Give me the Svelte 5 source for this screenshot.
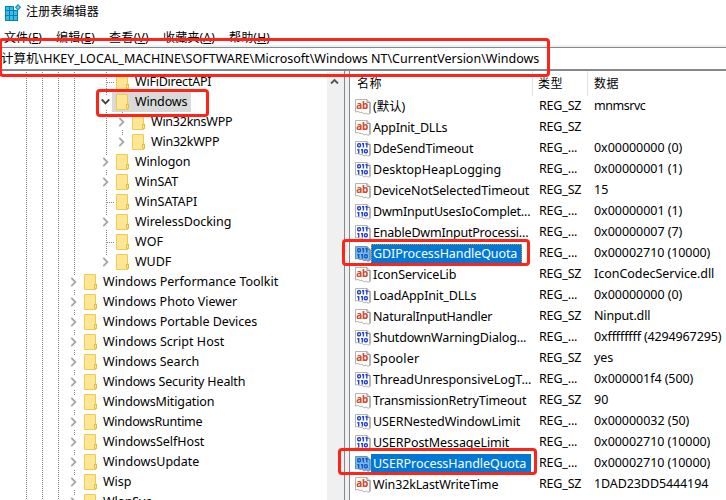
<script>
  const tree = [
    { name: 'WiFiDirectAPI', level: 1, width: 77, leaf: true },
    { name: 'Windows', level: 1, width: 53, open: true },
    { name: 'Win32knsWPP', level: 2, width: 82 },
    { name: 'Win32kWPP', level: 2, width: 69 },
    { name: 'Winlogon', level: 1, width: 56 },
    { name: 'WinSAT', level: 1, width: 44 },
    { name: 'WinSATAPI', level: 1, width: 63, leaf: true },
    { name: 'WirelessDocking', level: 1, width: 97 },
    { name: 'WOF', level: 1, width: 29, leaf: true },
    { name: 'WUDF', level: 1, width: 37 },
    { name: 'Windows Performance Toolkit', level: 0, width: 176 },
    { name: 'Windows Photo Viewer', level: 0, width: 135 },
    { name: 'Windows Portable Devices', level: 0, width: 155 },
    { name: 'Windows Script Host', level: 0, width: 122 },
    { name: 'Windows Search', level: 0, width: 97 },
    { name: 'Windows Security Health', level: 0, width: 143 },
    { name: 'WindowsMitigation', level: 0, width: 112 },
    { name: 'WindowsRuntime', level: 0, width: 100 },
    { name: 'WindowsSelfHost', level: 0, width: 102 },
    { name: 'WindowsUpdate', level: 0, width: 97 },
    { name: 'Wisp', level: 0, width: 29 },
    { name: 'WlanSvc', level: 0, width: 49 }
  ];

  // name, name width, is string, data, data width
  const values = [
    ['(默认)', 33, true, 'mnmsrvc', 52],
    ['AppInit_DLLs', 75, true, '', 0],
    ['DdeSendTimeout', 101, false, '0x00000000 (0)', 89],
    ['DesktopHeapLogging', 129, false, '0x00000001 (1)', 89],
    ['DeviceNotSelectedTimeout', 157, true, '15', 15],
    ['DwmInputUsesIoComplet...', 158, false, '0x00000001 (1)', 89],
    ['EnableDwmInputProcessi...', 156, false, '0x00000007 (7)', 89],
    ['GDIProcessHandleQuota', 145, false, '0x00002710 (10000)', 117],
    ['IconServiceLib', 84, true, 'IconCodecService.dll', 121],
    ['LoadAppInit_DLLs', 104, false, '0x00000000 (0)', 89],
    ['NaturalInputHandler', 120, true, 'Ninput.dll', 57],
    ['ShutdownWarningDialog...', 154, false, '0xffffffff (4294967295)', 128],
    ['Spooler', 47, true, 'yes', 20],
    ['ThreadUnresponsiveLogT...', 159, false, '0x000001f4 (500)', 100],
    ['TransmissionRetryTimeout', 154, true, '90', 15],
    ['USERNestedWindowLimit', 148, false, '0x00000032 (50)', 96],
    ['USERPostMessageLimit', 137, false, '0x00002710 (10000)', 117],
    ['USERProcessHandleQuota', 154, false, '0x00002710 (10000)', 117],
    ['Win32kLastWriteTime', 126, true, '1DAD23DD5444194', 115]
  ];

  const menus = [
    ['文件', 'F', 38],
    ['编辑', 'E', 39],
    ['查看', 'V', 40],
    ['收藏夹', 'A', 52],
    ['帮助', 'H', 41]
  ];

  function fit(node, width) {
    if (!width) return;
    node.style.letterSpacing = '0px';
    const natural = node.getBoundingClientRect().width;
    const count = Math.max(1, node.textContent.length);
    node.style.letterSpacing = ((width - 0.7 - natural) / count).toFixed(3) + 'px';
  }
</script>

<div class="app">
  <header class="title">
    <svg class="logo" width="17" height="17" viewBox="0 0 17 17">
      <path d="M0 2h9v4h4v11H0z" fill="#087fae" />
      <path d="M1 3h3v3H1zM5 3h3v3H5zM1 7h3v4H1zM5 7h3v4H5zM9 7h3v4H9zM1 12h3v4H1zM5 12h3v4H5zM9 12h3v4H9z" fill="#38bde6" />
      <path d="M13 0l3.2 3.2L13 6.4 9.8 3.2z" fill="#168dbb" />
      <path d="M13 1.5l1.7 1.7L13 4.9l-1.7-1.7z" fill="#5fd0ef" />
    </svg>
    <span use:fit={73.5}>注册表编辑器</span>
  </header>
  <nav class="menu">
    {#each menus as [label, key, width]}
      <span use:fit={width + 0.7}>{label}(<u>{key}</u>)</span>
    {/each}
  </nav>
  <div class="address"><span use:fit={539}>计算机\HKEY_LOCAL_MACHINE\SOFTWARE\Microsoft\Windows NT\CurrentVersion\Windows</span></div>

  <main>
    <section class="tree">
      <svg class="guides" width="130" height="429" fill="none" stroke="#858585" stroke-dasharray="1 1">
        <path d="M26.5 1V429M42.5 1V429M58.5 1V429M74.5 1V429M106.5 1V191M122.5 41V71M107 11.5H114M107 131.5H114M107 171.5H114" />
      </svg>
      {#each tree as item}
        <div class="node l{item.level}">
          <span class="toggle" class:blank={!item.leaf}>
            {#if item.open}
              <svg width="9" height="8" viewBox="0 0 9 8"><path d="M.7 1.3L4.5 5.4 8.3 1.3" fill="none" stroke="#404040" stroke-width="1.8" /></svg>
            {:else if !item.leaf}
              <svg width="9" height="10" viewBox="0 0 9 10"><path d="M2.3 .8L6.4 5 2.3 9.2" fill="none" stroke="#a6a6a6" stroke-width="1.8" /></svg>
            {/if}
          </span>
          <span class="entry" class:current={item.open}>
            <svg class="folder" width="13" height="16" viewBox="0 0 13 16">
              <path d="M.5 .5h11v9.5h1v4.5h-1v1H.5z" fill="#ffe694" stroke="#edca50" />
              <path d="M10.5 14.5v-4h2v4z" fill="#ffe694" stroke="#e8bd35" />
            </svg>
            <span class="label" use:fit={item.width}>{item.name}</span>
          </span>
        </div>
      {/each}
    </section>
    <div class="scroll">
      <svg width="9" height="7" viewBox="0 0 9 7"><path d="M1 5.5L4.5 2 8 5.5" fill="none" stroke="#555" stroke-width="1.8" /></svg>
    </div>
    <div class="splitter"></div>
    <section class="list">
      <div class="head">
        <span class="c1"><span use:fit={25.5}>名称</span></span>
        <span class="c2"><span use:fit={25.5}>类型</span></span>
        <span class="c3"><span use:fit={25.5}>数据</span></span>
      </div>
      {#each values as [name, width, str, data, dataWidth]}
        {@const sel = name.endsWith('HandleQuota')}
        <div class="row">
          <div class="name">
            <svg class="kind" width="16" height="16" viewBox="0 0 16 16">
              <path d="M.5 .5H12l3 3v11l-2 .8-2-1.3-2 1-2-1.8-2 .3-2-1-2.5.5z" fill={sel ? '#78b7ea' : '#fdfdfd'} stroke={sel ? '#6594bd' : '#b5b5b5'} />
              <path d="M12 .5v3h3v10.8" fill="none" stroke={sel ? '#5c83a8' : '#909090'} />
              {#if str}
                <text x="1.3" y="10" class="ab" textLength="12">ab</text>
              {:else}
                <g fill="none" stroke={sel ? '#1359c4' : '#2745d2'} stroke-width="1.4">
                  <rect x="2.7" y="2.7" width="2.8" height="3" rx="1" />
                  <path d="M7 2.7h1.4v3.8M10.4 2.7h1.4v3.8" />
                  <path d="M2.3 8.7h1.4v3.8M6 8.7h1.4v3.8" />
                  <rect x="9.5" y="8.8" width="2.8" height="3" rx="1" />
                </g>
              {/if}
            </svg>
            <span class="text" class:sel class:focus={name.startsWith('GDI')}><span use:fit={width}>{name}</span></span>
          </div>
          <div class="type"><span use:fit={str ? 43 : 39}>{str ? 'REG_SZ' : 'REG_...'}</span></div>
          <div class="data"><span use:fit={dataWidth}>{data}</span></div>
        </div>
      {/each}
    </section>
  </main>

  <div class="mark address-mark"></div>
  <div class="mark key-mark"></div>
  <div class="mark gdi-mark"></div>
  <div class="mark user-mark"></div>
</div>

<style>
  :global(body) { margin: 0; background: #fff; }
  .app {
    position: relative;
    display: flex;
    flex-direction: column;
    width: 726px;
    height: 500px;
    overflow: hidden;
    background: #fff;
    color: #000;
    font: 12.5px/20px "Noto Sans", "Noto Sans CJK SC", sans-serif;
    white-space: nowrap;
  }
  svg { display: block; flex: none; }
  .app span { flex: none; }
  .title { display: flex; height: 26px; padding: 2px 0 0 5px; box-sizing: border-box; gap: 4px; font-size: 12px; }
  .title .logo { margin-top: 2px; }
  .menu { display: flex; height: 19px; padding-left: 4px; gap: 14px; font-size: 12px; line-height: 23px; }
  .menu u { text-underline-offset: 1px; }
  .address {
    height: 26px;
    box-sizing: border-box;
    border-top: 2px solid #f0f0f0;
    box-shadow: inset 0 1px #828790, inset 0 -2px #828790;
    padding-left: 1px;
    line-height: 24px;
  }
  main { display: flex; height: 429px; }
  .tree { position: relative; width: 327px; padding-top: 1px; box-sizing: border-box; }
  .guides { position: absolute; left: 0; top: 0; }
  .node { position: relative; display: flex; align-items: center; height: 20px; }
  .l0 { padding-left: 69px; }
  .l1 { padding-left: 101px; }
  .l2 { padding-left: 117px; }
  .toggle { display: flex; align-items: center; width: 11px; height: 14px; }
  .blank { background: #fff; }
  .entry { display: flex; align-items: center; height: 20px; padding: 0 4px; }
  .current { background: #d9d9d9; }
  .label { margin-left: 6px; }
  .scroll { width: 17px; margin-top: 1px; background: #f0f0f0; }
  .scroll svg { margin: 6px 0 0 3px; }
  .splitter { width: 4px; background: #f0f0f0; border-left: 1px solid #828790; border-right: 1px solid #828790; }
  .list { width: 376px; }
  .head { display: flex; height: 25px; font-size: 12px; line-height: 25px; }
  .head > span { box-sizing: border-box; border-right: 1px solid #e2e2e2; }
  .c1 { width: 183px; padding-left: 7px; }
  .c2 { width: 55px; padding-left: 5px; }
  .c3 { width: 138px; padding-left: 6px; }
  .head > .c3 { border: 0; }
  .row { display: grid; grid-template-columns: 189px 55px 1fr; height: 21px; line-height: 20px; }
  .name { display: flex; align-items: center; padding-left: 5px; }
  .text { height: 20px; padding: 0 5px 0 2px; }
  .text.sel { background: #0078d7; color: #fff; }
  .text.focus { outline: 1px dotted #e08a3c; outline-offset: -1px; }
  .ab { font: bold 10px "Noto Sans", sans-serif; fill: #d24726; }
  .mark { position: absolute; box-sizing: border-box; border: 3px solid #ff2418; border-radius: 4px; }
  .address-mark { left: -1px; top: 38px; width: 551px; height: 39px; }
  .key-mark { left: 96px; top: 89px; width: 113px; height: 28px; }
  .gdi-mark { left: 342px; top: 239px; width: 188px; height: 27px; }
  .user-mark { left: 338px; top: 448px; width: 199px; height: 27px; }
</style>
